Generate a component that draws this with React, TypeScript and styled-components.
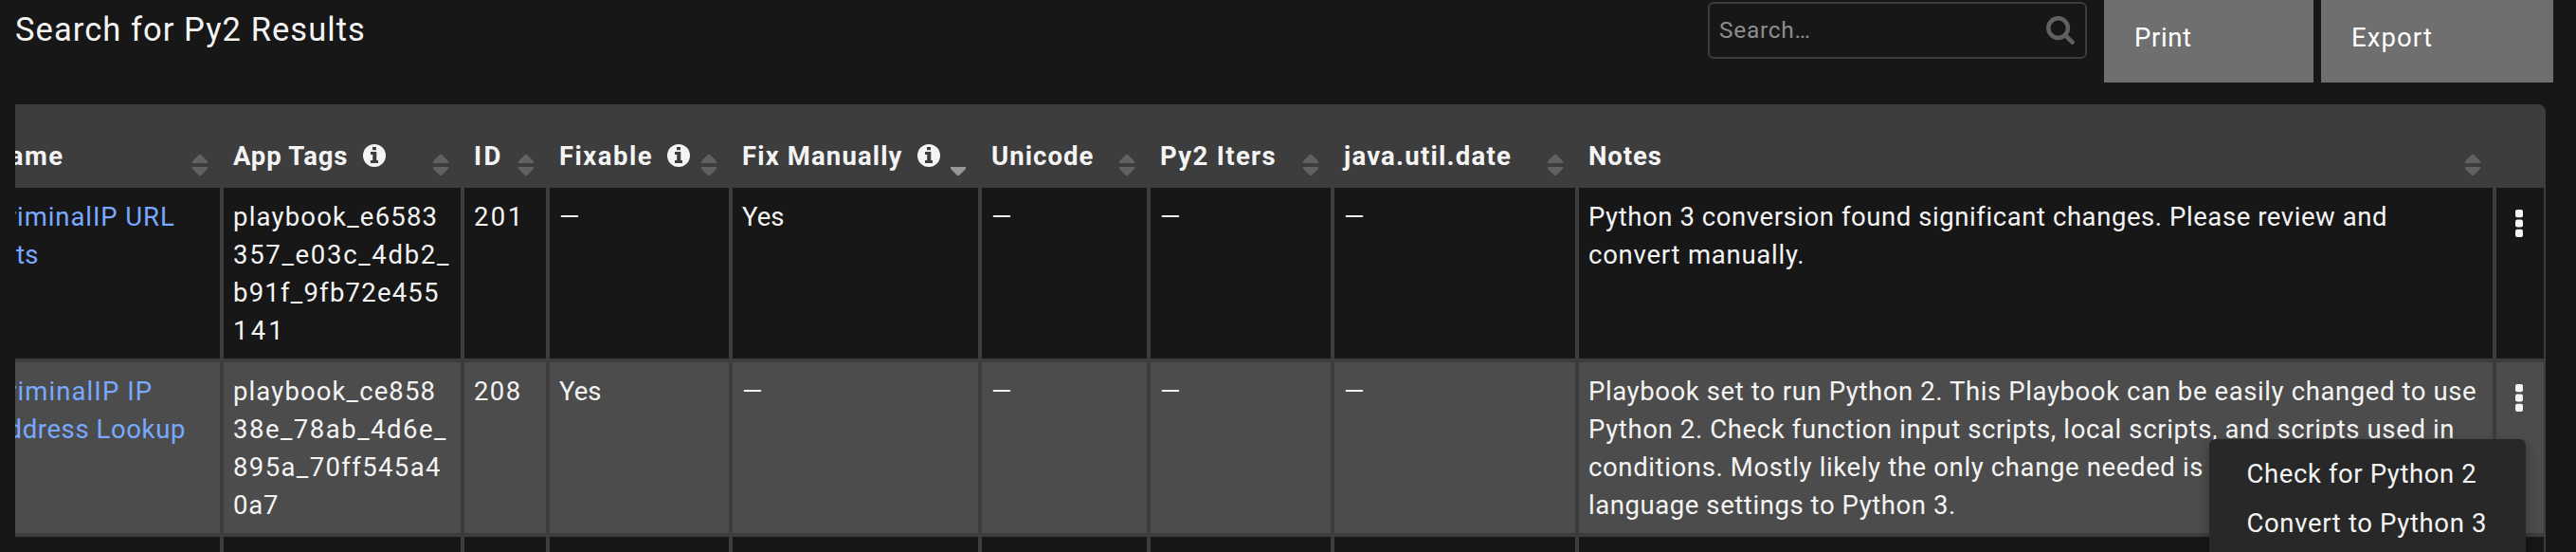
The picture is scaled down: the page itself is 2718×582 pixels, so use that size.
import React from "react";
import styled, { createGlobalStyle } from "styled-components";

const GlobalStyle = createGlobalStyle`
  * { box-sizing: border-box; }
  body {
    margin: 0;
    background: #171717;
    color: #f4f4f4;
    font-family: Roboto, "Liberation Sans", sans-serif;
    font-size: 27.5px;
    line-height: 40px;
    overflow: hidden;
  }
`;

const Page = styled.main`
  height: 582px;
  overflow: hidden;
  position: relative;
`;

const Toolbar = styled.header`
  display: flex;
  align-items: flex-start;
  height: 110px;
  padding: 0 24px 0 16px;
`;

const Title = styled.h1`
  flex: 1;
  margin: 0;
  padding-top: 11px;
  font-size: 34.5px;
  font-weight: 400;
  letter-spacing: 1.06px;
`;

const SearchBox = styled.label`
  display: flex;
  align-items: center;
  justify-content: space-between;
  width: 400px;
  height: 60px;
  margin: 2px 18px 0 0;
  padding: 0 11px 0 10px;
  border: 2px solid #3d3d3d;
  border-radius: 6px;
`;

const SearchInput = styled.input`
  width: 300px;
  padding: 0;
  border: 0;
  outline: 0;
  background: none;
  color: #f4f4f4;
  font: 24.5px/40px Roboto, "Liberation Sans", sans-serif;
  letter-spacing: 0.7px;
  &::placeholder { color: #8d8d8d; opacity: 1; }
`;

const SearchSvg = styled.svg`
  flex: none;
  width: 30px;
  height: 30px;
  color: #616161;
`;

const ActionButton = styled.button<{ $width: number; $spacing: number }>`
  display: flex;
  align-items: flex-start;
  width: ${(p) => p.$width}px;
  height: 87px;
  margin: 0;
  padding: 20px 0 0 32px;
  border: 0;
  background: #6f6f6f;
  color: #fff;
  font: 27.5px/40px Roboto, "Liberation Sans", sans-serif;
  letter-spacing: ${(p) => p.$spacing}px;
  & + & { margin-left: 8px; }
`;

const TableViewport = styled.section`
  width: 2670px;
  margin-left: 16px;
  overflow: hidden;
  border-radius: 0 8px 0 0;
`;

const Table = styled.div`
  width: 2707px;
  margin-left: -37px;
  padding-right: 2px;
  background: #3d3d3d;
`;

const columns = "253px 250px 86px 189px 259px 174px 190px 254px 964px 50px";

const HeadRow = styled.div`
  display: grid;
  grid-template-columns: ${columns};
  column-gap: 4px;
  height: 88px;
`;

const HeadCell = styled.div`
  display: flex;
  align-items: flex-start;
  padding: 35px 13px 0 10px;
  font-weight: 700;
`;

const HeadLabel = styled.span<{ $spacing: number; $width?: number }>`
  flex: none;
  width: ${(p) => (p.$width ? `${p.$width}px` : "auto")};
  letter-spacing: ${(p) => p.$spacing}px;
  white-space: nowrap;
`;

const InfoSvg = styled.svg`
  flex: none;
  width: 24px;
  height: 24px;
  margin-top: 7px;
`;

const SortSvg = styled.svg`
  flex: none;
  width: 16px;
  height: 22px;
  margin: 18px 0 0 auto;
`;

const BodyRow = styled.div<{ $highlight?: boolean; $height: number }>`
  display: grid;
  grid-template-columns: ${columns};
  column-gap: 4px;
  height: ${(p) => p.$height}px;
  & > * { background: ${(p) => (p.$highlight ? "#4c4c4c" : "#171717")}; }
  & + & { margin-top: 4px; }
`;

const Cell = styled.div`
  padding: 11px 0 0 10px;
  overflow: hidden;
`;

const MenuCell = styled.div`
  padding: 23px 0 0 20px;
`;

const Line = styled.div<{ $spacing: number; $indent?: number }>`
  letter-spacing: ${(p) => p.$spacing}px;
  padding-left: ${(p) => p.$indent ?? 0}px;
  white-space: nowrap;
`;

const NameLink = styled.a`
  display: block;
  color: #78a9ff;
  text-decoration: none;
`;

const KebabSvg = styled.svg`
  display: block;
  width: 8px;
  height: 29px;
`;

const Menu = styled.div`
  position: absolute;
  left: 2331px;
  top: 463px;
  width: 334px;
  height: 140px;
  padding: 17px 0 0 39.5px;
  border-radius: 6px;
  background: #282828;
  box-shadow: 0 4px 12px rgba(0, 0, 0, 0.3);
`;

const MenuItem = styled.div<{ $spacing: number }>`
  height: 52px;
  letter-spacing: ${(p) => p.$spacing}px;
  white-space: nowrap;
`;

type Sort = "none" | "both" | "down";

function SortIcon({ state }: { state: Sort }) {
  return (
    <SortSvg viewBox="0 0 16 22" fill={state === "down" ? "#979797" : "#616161"}>
      {state === "both" && <path d="M7 0h2l7 7v2H0V7z" />}
      <path d="M0 13h16v2l-7 7H7l-7-7z" />
    </SortSvg>
  );
}

function InfoIcon() {
  return (
    <InfoSvg viewBox="0 0 24 24">
      <circle cx="12" cy="12" r="12" fill="#f4f4f4" />
      <path d="M10 3h4v3.2h-4zM8 8h6.3v9H16v3H8v-3h2.2v-6H8z" fill="#3d3d3d" />
    </InfoSvg>
  );
}

function SearchIcon() {
  return (
    <SearchSvg viewBox="0 0 30 30" fill="none" stroke="currentColor" strokeWidth="4.5" strokeLinecap="round">
      <circle cx="12.6" cy="12.6" r="10.3" />
      <path d="M20.3 20.3l7.3 7.3" />
    </SearchSvg>
  );
}

function Kebab() {
  return (
    <KebabSvg viewBox="0 0 8 29" fill="#f4f4f4">
      <rect x="0" y="0" width="8" height="8.2" rx="2" />
      <rect x="0" y="10.4" width="8" height="8.2" rx="2" />
      <rect x="0" y="20.8" width="8" height="8.2" rx="2" />
    </KebabSvg>
  );
}

const headers: { label: string; spacing: number; width?: number; info?: boolean; sort: Sort }[] = [
  { label: "Name", spacing: 1.4, sort: "both" },
  { label: "App Tags", spacing: 0.82, width: 137, info: true, sort: "both" },
  { label: "ID", spacing: 2.4, sort: "both" },
  { label: "Fixable", spacing: 1.5, width: 114, info: true, sort: "both" },
  { label: "Fix Manually", spacing: 1.14, width: 184.5, info: true, sort: "down" },
  { label: "Unicode", spacing: 1.07, sort: "both" },
  { label: "Py2 Iters", spacing: 1.36, sort: "both" },
  { label: "java.util.date", spacing: 1.24, sort: "both" },
  { label: "Notes", spacing: 0.9, sort: "both" },
  { label: "", spacing: 0, sort: "none" },
];

type TextLine = [text: string, spacing: number, indent?: number];

const dash: TextLine[] = [["—", 0]];

const rows: { highlight?: boolean; name: TextLine[]; cells: TextLine[][] }[] = [
  {
    name: [["CriminalIP URL", 0.92], ["ts", 0.3, 28]],
    cells: [
      [["playbook_e6583", 1.2], ["357_e03c_4db2_", 1.7], ["b91f_9fb72e455", 1.22], ["141", 3.2]],
      [["201", 2.4]],
      dash,
      [["Yes", 0]],
      dash,
      dash,
      dash,
      [
        ["Python 3 conversion found significant changes. Please review and", 0.57],
        ["convert manually.", 0.76],
      ],
    ],
  },
  {
    highlight: true,
    name: [["CriminalIP IP", 1.1], ["Address Lookup", 0.6]],
    cells: [
      [["playbook_ce858", 1.12], ["38e_78ab_4d6e_", 1.49], ["895a_70ff545a4", 1.38], ["0a7", 0.79]],
      [["208", 1.4]],
      [["Yes", 0]],
      dash,
      dash,
      dash,
      dash,
      [
        ["Playbook set to run Python 2. This Playbook can be easily changed to use", 0.6],
        ["Python 2. Check function input scripts, local scripts, and scripts used in", 0.63],
        ["conditions. Mostly likely the only change needed is", 0.63],
        ["language settings to Python 3.", 0.57],
      ],
    ],
  },
];

function Lines({ lines }: { lines: TextLine[] }) {
  return (
    <>
      {lines.map(([text, spacing, indent]) => (
        <Line key={text} $spacing={spacing} $indent={indent}>{text}</Line>
      ))}
    </>
  );
}

export default function App() {
  return (
    <Page>
      <GlobalStyle />
      <Toolbar>
        <Title>Search for Py2 Results</Title>
        <SearchBox>
          <SearchInput placeholder="Search…" />
          <SearchIcon />
        </SearchBox>
        <ActionButton $width={221} $spacing={0.61}>Print</ActionButton>
        <ActionButton $width={245} $spacing={1.1}>Export</ActionButton>
      </Toolbar>
      <TableViewport>
        <Table>
          <HeadRow>
            {headers.map((h) => (
              <HeadCell key={h.label}>
                <HeadLabel $spacing={h.spacing} $width={h.width}>{h.label}</HeadLabel>
                {h.info && <InfoIcon />}
                {h.sort !== "none" && <SortIcon state={h.sort} />}
              </HeadCell>
            ))}
          </HeadRow>
          {rows.map((row, i) => (
            <BodyRow key={i} $highlight={row.highlight} $height={180}>
              <Cell><NameLink><Lines lines={row.name} /></NameLink></Cell>
              {row.cells.map((lines, j) => (
                <Cell key={j}><Lines lines={lines} /></Cell>
              ))}
              <MenuCell><Kebab /></MenuCell>
            </BodyRow>
          ))}
          <BodyRow $height={16}>
            {Array.from({ length: 10 }, (_, i) => <div key={i} />)}
          </BodyRow>
        </Table>
      </TableViewport>
      <Menu>
        <MenuItem $spacing={0.6}>Check for Python 2</MenuItem>
        <MenuItem $spacing={0.64}>Convert to Python 3</MenuItem>
      </Menu>
    </Page>
  );
}
